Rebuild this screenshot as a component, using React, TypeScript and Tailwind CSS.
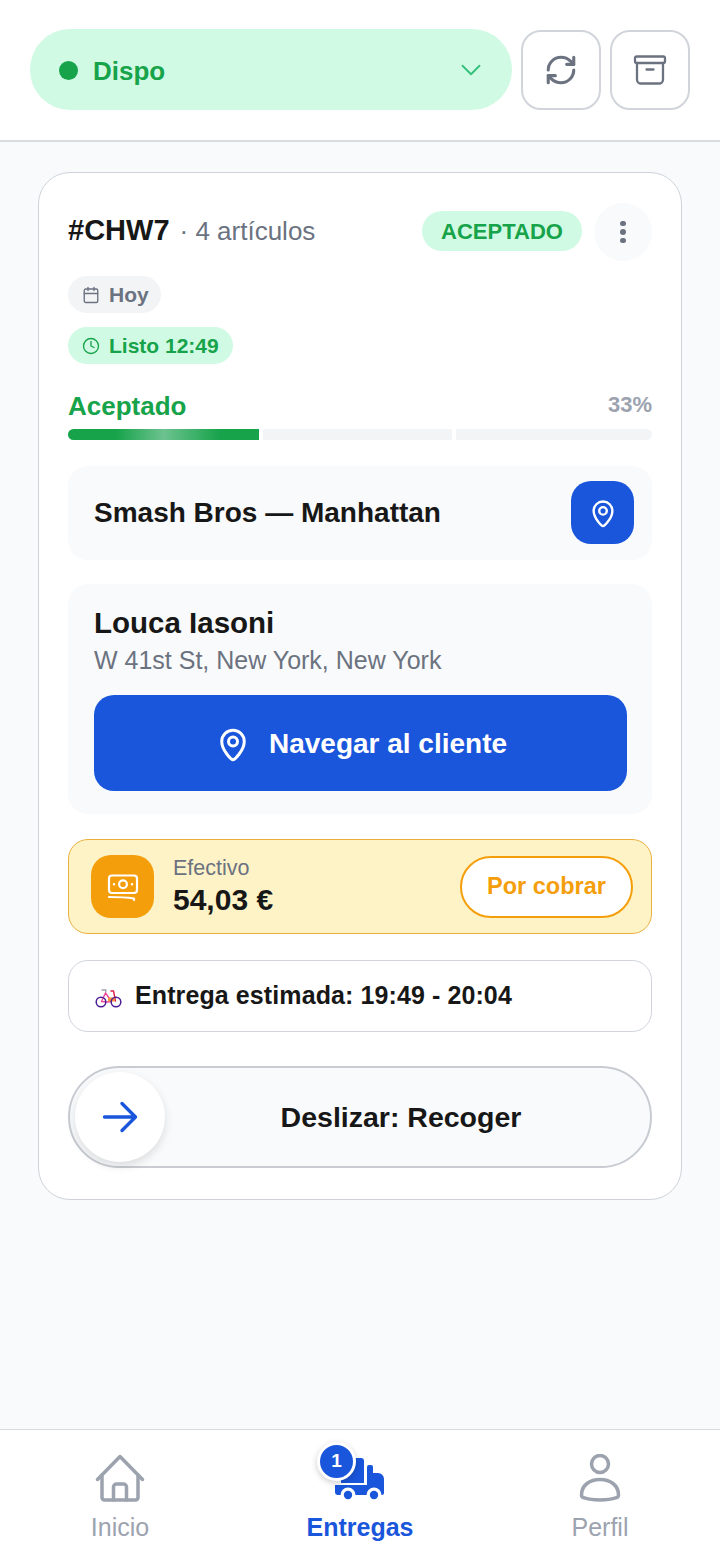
import React from "react";
import { ChevronDown, RefreshCw, Calendar, Clock } from "lucide-react";

function Pin({ size, sw = 2 }: { size: number; sw?: number }) {
  return (
    <svg width={size} height={size} viewBox="0 0 24 24" fill="none" stroke="currentColor" strokeWidth={sw} strokeLinecap="round" strokeLinejoin="round">
      <path d="M12 22.5c-1 0-7.5-6.2-7.5-12.2a7.5 7.5 0 0 1 15 0c0 6-6.500 12.200-7.500 12.200z" />
      <circle cx="12" cy="10.300" r="3" />
    </svg>
  );
}

function Archive() {
  return (
    <svg width="34" height="34" viewBox="0 0 34 34" fill="none" stroke="#6b7280" strokeWidth="2.300" strokeLinecap="round" strokeLinejoin="round">
      <rect x="2" y="3.500" width="30" height="6.500" rx="1.800" />
      <path d="M4 10v16.500a4 4 0 0 0 4 4h18a4 4 0 0 0 4-4V10" />
      <path d="M13.500 16.500h7" />
    </svg>
  );
}

function Money() {
  return (
    <svg width="32" height="30" viewBox="0 0 32 30" fill="none" stroke="#fff" strokeWidth="2.200" strokeLinecap="round" strokeLinejoin="round" className="translate-y-[1px]">
      <rect x="2" y="2.500" width="28" height="17.500" rx="3" />
      <circle cx="16" cy="11.200" r="3.900" />
      <path d="M7 11.200h.1M25 11.200h.1" strokeWidth="2.400" />
      <path d="M2 24c8 0 17 .3 25 1.500v1.500" />
    </svg>
  );
}

function Bike() {
  return (
    <svg width="27" height="22" viewBox="0 0 27 22" fill="none" strokeLinecap="round" strokeLinejoin="round" className="translate-y-[2px]">
      <path d="M7 3h4l-.5 3" stroke="#9ca3af" strokeWidth="1.300" />
      <path d="M6.500 14.500 10.500 6l6 8.500-4 .5z" stroke="#ec4899" strokeWidth="1.400" />
      <path d="M16 4h2.500l2 10" stroke="#e11d48" strokeWidth="1.400" />
      <rect x="13" y="10.500" width="7" height="4" rx="1" fill="#fb923c" />
      <circle cx="6" cy="15" r="4.800" stroke="#4c1d95" strokeWidth="1.500" />
      <circle cx="21" cy="15" r="4.800" stroke="#4c1d95" strokeWidth="1.500" />
    </svg>
  );
}

function SlideArrow() {
  return (
    <svg width="36" height="32" viewBox="0 0 36 32" fill="none" stroke="#1a56db" strokeWidth="3.400" strokeLinecap="round" strokeLinejoin="round">
      <path d="M2.500 16h31M20 2.500 33.500 16 20 29.500" />
    </svg>
  );
}

function HomeIcon() {
  return (
    <svg width="50" height="50" viewBox="0 0 50 50" fill="none" stroke="#9ca3af" strokeWidth="3.500" strokeLinecap="round" strokeLinejoin="round">
      <path d="M2.500 25.500 25 2.500l22.500 23" />
      <path d="M7 21V43.500a2.500 2.500 0 0 0 2.500 2.500h31a2.500 2.500 0 0 0 2.500-2.500V21" />
      <path d="M18.500 46V33a3 3 0 0 1 3-3h7a3 3 0 0 1 3 3v13" />
    </svg>
  );
}

function UserIcon() {
  return (
    <svg width="42" height="50" viewBox="0 0 42 50" fill="none" stroke="#9ca3af" strokeWidth="3.500" strokeLinecap="round" strokeLinejoin="round">
      <circle cx="21" cy="10" r="8.500" />
      <path d="M2.500 41c0-10 8.500-15.500 18.500-15.500S39.500 31 39.500 41c0 1.500-.8 2.300-2 2.700-5 1.700-11 2.300-16.500 2.300s-11.500-.6-16.500-2.300c-1.200-.4-2-1.200-2-2.700z" />
    </svg>
  );
}

function Truck() {
  return (
    <svg width="52" height="46" viewBox="0 0 52 46" fill="#1a56db">
      <path d="M8 28V3h20a3 3 0 0 1 3 3v22z" />
      <path d="M34 12a2 2 0 0 1 2-2h2a2 2 0 0 1 2 2v6h5a6 6 0 0 1 6 6v14a2 2 0 0 1-2 2H34z" />
      <path d="M2 30h32v10H5a3 3 0 0 1-3-3z" />
      <circle cx="15" cy="40" r="7.500" fill="#fff" />
      <circle cx="41" cy="40" r="7.500" fill="#fff" />
      <circle cx="15" cy="40" r="4.200" />
      <circle cx="41" cy="40" r="4.200" />
    </svg>
  );
}

export default function App() {
  return (
    <div className="flex h-[1558px] w-[720px] flex-col overflow-hidden bg-gray-50 font-['Liberation_Sans',Arial,sans-serif] text-[#171717]">
      <header className="flex h-[142px] shrink-0 items-start gap-[9px] border-b-2 border-[#d9dbdf] bg-white pl-[30px] pr-[30px] pt-[29px]">
        <div className="flex h-[81px] w-[483px] items-center rounded-[40px] bg-[#d1fae5] pl-[29px] pr-[24px]">
          <span className="mt-[2px] h-[19px] w-[19px] rounded-full bg-[#16a34a]" />
          <span className="ml-[15px] mt-[3px] flex-1 text-[26px] font-bold text-[#16a34a]">Dispo</span>
          <ChevronDown size={34} strokeWidth={1.300} className="text-[#34c07a]" />
        </div>
        <button className="mt-px flex h-[80px] w-[80px] items-center justify-center rounded-[20px] border-2 border-[#d1d5db] bg-white">
          <RefreshCw size={34} strokeWidth={2.200} className="text-[#6b7280]" />
        </button>
        <button className="mt-px flex h-[80px] w-[80px] items-center justify-center rounded-[20px] border-2 border-[#d1d5db] bg-white">
          <Archive />
        </button>
      </header>

      <main className="flex-1 px-[38px] pt-[30px]">
        <section className="h-[1028px] rounded-[32px] border border-[#cfd3d9] bg-white px-[29px] pt-[30px]">
          <div className="flex h-[58px] items-center">
            <span className="mb-[2px] text-[29px] font-bold">#CHW7</span>
            <span className="mb-[2px] ml-[10px] text-[26px] text-[#6b7280]">· 4 artículos</span>
            <span className="mb-[2px] ml-auto flex h-[40px] w-[160px] items-center justify-center rounded-full bg-[#d1fae5] text-[22px] font-bold text-[#16a34a]">ACEPTADO</span>
            <span className="ml-[12px] flex h-[58px] w-[58px] items-center justify-center rounded-full bg-gray-50">
              <span className="flex flex-col gap-[3px]">
                <i className="h-[5.500px] w-[5.500px] rounded-full bg-[#6b7280]" />
                <i className="h-[5.500px] w-[5.500px] rounded-full bg-[#6b7280]" />
                <i className="h-[5.500px] w-[5.500px] rounded-full bg-[#6b7280]" />
              </span>
            </span>
          </div>

          <div className="mt-[15px] flex h-[37px] w-[93px] items-center gap-[9px] rounded-full bg-[#f3f4f6] pl-[14px] text-[21px] font-bold text-[#6b7280]">
            <Calendar size={18} strokeWidth={1.800} />
            Hoy
          </div>
          <div className="mt-[14px] flex h-[37px] w-[165px] items-center gap-[9px] rounded-full bg-[#d1fae5] pl-[14px] text-[21px] font-bold text-[#16a34a]">
            <Clock size={18} strokeWidth={1.800} />
            Listo 12:49
          </div>

          <div className="mt-[28px] flex h-[28px] items-center justify-between">
            <span className="text-[26px] font-bold text-[#16a34a]">Aceptado</span>
            <span className="mb-[4px] text-[22px] font-bold text-[#9ca3af]">33%</span>
          </div>
          <div className="mt-[9px] flex h-[11px] gap-[4px]">
            <div className="w-[191px] rounded-l-full rounded-r-[2px] bg-[linear-gradient(90deg,#16a34a_0%,#16a34a_25%,#6cc28f_50%,#16a34a_80%,#16a34a_100%)]" />
            <div className="w-[189px] rounded-[2px] bg-[#f3f4f6]" />
            <div className="flex-1 rounded-r-full rounded-l-[2px] bg-[#f3f4f6]" />
          </div>

          <div className="mt-[26px] flex h-[94px] items-center justify-between rounded-[20px] bg-gray-50 pl-[26px] pr-[18px]">
            <span className="text-[28px] font-bold">Smash Bros — Manhattan</span>
            <span className="mb-[1px] flex h-[63px] w-[63px] items-center justify-center rounded-[20px] bg-[#1a56db] text-white">
              <Pin size={30} sw={1.900} />
            </span>
          </div>

          <div className="mt-[24px] h-[230px] rounded-[20px] bg-gray-50 pl-[26px] pr-[25px] pt-[22px]">
            <div className="text-[29.500px] font-bold leading-[34px]">Louca Iasoni</div>
            <div className="mt-[4px] text-[25px] leading-[32px] text-[#6b7280]">W 41st St, New York, New York</div>
            <button className="mt-[19px] flex h-[96px] w-full items-center justify-center gap-[18px] rounded-[20px] bg-[#1a56db] pl-[1px] pt-[1px] text-[28px] font-bold text-white">
              <Pin size={36} sw={2} />
              Navegar al cliente
            </button>
          </div>

          <div className="mt-[25px] flex h-[95px] items-center rounded-[20px] border border-[#eab03c] bg-[#fef3c7] pl-[22px] pr-[18px]">
            <span className="flex h-[63px] w-[63px] items-center justify-center rounded-[20px] bg-[#f59e0b]">
              <Money />
            </span>
            <div className="ml-[19px] flex-1">
              <div className="text-[21.500px] leading-[24px] text-[#6b7280]">Efectivo</div>
              <div className="mt-[2px] text-[30px] font-bold leading-[36px]">54,03 €</div>
            </div>
            <span className="flex h-[62px] w-[173px] items-center justify-center rounded-full border-2 border-[#f59e0b] bg-white text-[23.500px] font-bold text-[#f59e0b]">Por cobrar</span>
          </div>

          <div className="mt-[26px] flex h-[72px] items-center gap-[13px] rounded-[20px] border border-[#d1d5db] bg-white pl-[26px] text-[25px] font-bold tracking-[0.1px]">
            <Bike />
            <span>Entrega estimada: 19:49 - 20:04</span>
          </div>

          <div className="relative mt-[34px] flex h-[102px] items-center justify-center rounded-full border-2 border-[#c8ccd2] bg-gray-50 pl-[82px] text-[28.500px] font-bold">
            <span className="absolute left-[5px] top-[4px] flex h-[90px] w-[90px] items-center justify-center rounded-full bg-white shadow-[0_4px_10px_rgba(0,0,0,0.12)]">
              <SlideArrow />
            </span>
            Deslizar: Recoger
          </div>
        </section>
      </main>

      <nav className="grid h-[129px] shrink-0 grid-cols-3 border-t border-[#d9dbdf] bg-white">
        <div className="flex flex-col items-center pt-[24px] text-[25px] text-[#9ca3af]">
          <HomeIcon />
          <span className="mt-[5px] leading-[36px]">Inicio</span>
        </div>
        <div className="flex flex-col items-center pt-[24px] text-[25px] font-bold text-[#1a56db]">
          <div className="relative h-[50px] w-[52px] -translate-x-[1px] pt-[1px]">
            <Truck />
            <span className="absolute left-[-16px] top-[-12px] box-content flex h-[33px] w-[33px] items-center justify-center rounded-full border-[3.500px] border-white bg-[#1a56db] text-[19px] font-bold text-white shadow-[0_2px_6px_rgba(0,0,0,0.2)]">1</span>
          </div>
          <span className="mt-[5px] leading-[36px]">Entregas</span>
        </div>
        <div className="flex flex-col items-center pt-[24px] text-[25px] text-[#9ca3af]">
          <UserIcon />
          <span className="mt-[5px] leading-[36px]">Perfil</span>
        </div>
      </nav>
    </div>
  );
}
